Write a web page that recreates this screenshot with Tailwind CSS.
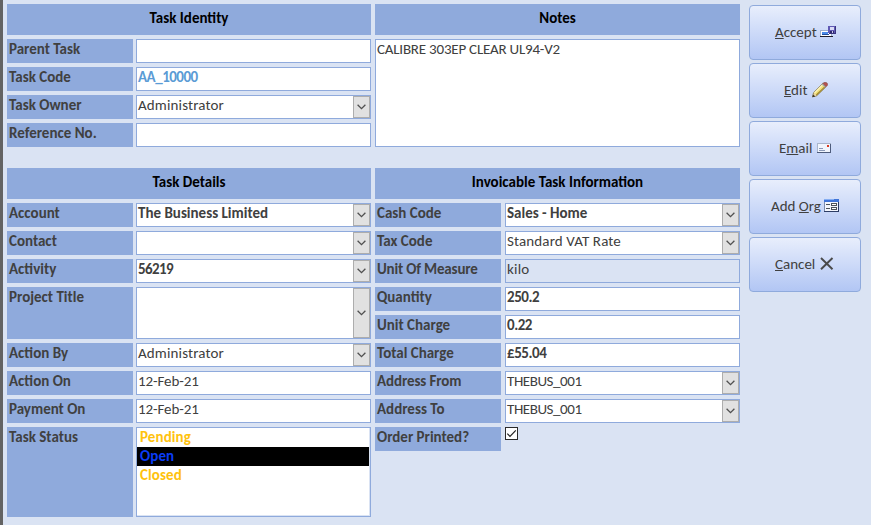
<!DOCTYPE html>
<html lang="en">
<head>
<meta charset="utf-8">
<title>Task</title>
<script src="https://cdn.jsdelivr.net/npm/@tailwindcss/browser@4"></script>
</head>
<body class="flex h-[525px] w-[871px] overflow-hidden bg-[#dae3f3] font-['Carlito','Lato',sans-serif] text-[15px] leading-[16px] text-[#404040] lining-nums">
<svg class="hidden">
  <symbol id="chev" viewBox="0 0 9 6"><path d="M.6 .8 4.5 4.7 8.4 .8" fill="none" stroke="#505050" stroke-width="1.3"/></symbol>
</svg>
<div class="w-[3px] shrink-0 bg-[#636363]"></div>

<main class="ml-1 flex w-[733px] shrink-0 flex-col gap-[21px] pt-1">
  <div class="flex gap-1">
    <section class="flex w-[364px] flex-col gap-1">
      <h2 class="h-[31px] bg-[#8faadc] pt-[6px] text-center font-bold text-black">Task Identity</h2>
      <div class="flex h-6 gap-[3px]">
        <div class="w-[126px] bg-[#8faadc] pt-[2px] pl-[2px] font-bold">Parent Task</div>
        <div class="w-[235px] border border-[#8faadc] bg-white"></div>
      </div>
      <div class="flex h-6 gap-[3px]">
        <div class="w-[126px] bg-[#8faadc] pt-[2px] pl-[2px] font-bold">Task Code</div>
        <div class="w-[235px] border border-[#8faadc] bg-white pt-px pl-px font-bold tracking-[-0.5px] text-[#5b9bd5]">AA_10000</div>
      </div>
      <div class="flex h-6 gap-[3px]">
        <div class="w-[126px] bg-[#8faadc] pt-[2px] pl-[2px] font-bold">Task Owner</div>
        <div class="flex w-[235px] justify-between border border-[#8faadc] bg-white pl-px"><span class="pt-px tracking-[0.15px]">Administrator</span><span class="flex w-[17px] items-center justify-center border border-[#adadad] bg-[#e1e1e1]"><svg class="h-[6px] w-[9px]"><use href="#chev"/></svg></span></div>
      </div>
      <div class="flex h-6 gap-[3px]">
        <div class="w-[126px] bg-[#8faadc] pt-[2px] pl-[2px] font-bold">Reference No.</div>
        <div class="w-[235px] border border-[#8faadc] bg-white"></div>
      </div>
    </section>
    <section class="flex w-[365px] flex-col gap-1">
      <h2 class="h-[31px] bg-[#8faadc] pt-[6px] text-center font-bold text-black">Notes</h2>
      <div class="h-[108px] border border-[#8faadc] bg-white pt-px pl-px tracking-[-0.21px]">CALIBRE 303EP CLEAR UL94-V2</div>
    </section>
  </div>

  <div class="flex gap-1">
    <section class="flex w-[364px] flex-col gap-1">
      <h2 class="h-[31px] bg-[#8faadc] pt-[6px] text-center font-bold text-black">Task Details</h2>
      <div class="flex h-6 gap-[3px]">
        <div class="w-[126px] bg-[#8faadc] pt-[2px] pl-[2px] font-bold">Account</div>
        <div class="flex w-[235px] justify-between border border-[#8faadc] bg-white pl-px"><span class="pt-px font-bold">The Business Limited</span><span class="flex w-[17px] items-center justify-center border border-[#adadad] bg-[#e1e1e1]"><svg class="h-[6px] w-[9px]"><use href="#chev"/></svg></span></div>
      </div>
      <div class="flex h-6 gap-[3px]">
        <div class="w-[126px] bg-[#8faadc] pt-[2px] pl-[2px] font-bold">Contact</div>
        <div class="flex w-[235px] justify-end border border-[#8faadc] bg-white"><span class="flex w-[17px] items-center justify-center border border-[#adadad] bg-[#e1e1e1]"><svg class="h-[6px] w-[9px]"><use href="#chev"/></svg></span></div>
      </div>
      <div class="flex h-6 gap-[3px]">
        <div class="w-[126px] bg-[#8faadc] pt-[2px] pl-[2px] font-bold">Activity</div>
        <div class="flex w-[235px] justify-between border border-[#8faadc] bg-white pl-px"><span class="pt-px font-bold tracking-[-0.6px]">56219</span><span class="flex w-[17px] items-center justify-center border border-[#adadad] bg-[#e1e1e1]"><svg class="h-[6px] w-[9px]"><use href="#chev"/></svg></span></div>
      </div>
      <div class="flex h-[52px] gap-[3px]">
        <div class="w-[126px] bg-[#8faadc] pt-[2px] pl-[2px] font-bold">Project Title</div>
        <div class="flex w-[235px] justify-end border border-[#8faadc] bg-white"><span class="flex w-[17px] items-center justify-center border border-[#adadad] bg-[#e1e1e1]"><svg class="h-[6px] w-[9px]"><use href="#chev"/></svg></span></div>
      </div>
      <div class="flex h-6 gap-[3px]">
        <div class="w-[126px] bg-[#8faadc] pt-[2px] pl-[2px] font-bold">Action By</div>
        <div class="flex w-[235px] justify-between border border-[#8faadc] bg-white pl-px"><span class="pt-px tracking-[0.15px]">Administrator</span><span class="flex w-[17px] items-center justify-center border border-[#adadad] bg-[#e1e1e1]"><svg class="h-[6px] w-[9px]"><use href="#chev"/></svg></span></div>
      </div>
      <div class="flex h-6 gap-[3px]">
        <div class="w-[126px] bg-[#8faadc] pt-[2px] pl-[2px] font-bold">Action On</div>
        <div class="w-[235px] border border-[#8faadc] bg-white pt-px pl-px tracking-[-0.1px]">12-Feb-21</div>
      </div>
      <div class="flex h-6 gap-[3px]">
        <div class="w-[126px] bg-[#8faadc] pt-[2px] pl-[2px] font-bold">Payment On</div>
        <div class="w-[235px] border border-[#8faadc] bg-white pt-px pl-px tracking-[-0.1px]">12-Feb-21</div>
      </div>
      <div class="flex h-[90px] gap-[3px]">
        <div class="w-[126px] bg-[#8faadc] pt-[2px] pl-[2px] font-bold">Task Status</div>
        <div class="w-[235px] border border-[#8faadc] pr-px pb-px">
          <ul class="h-full bg-white font-bold tracking-[0.1px] text-[#ffc20e]">
            <li class="h-[19px] pt-px pl-[3px]">Pending</li>
            <li class="h-[19px] bg-black pt-px pl-[3px] text-[#0a3cf5]">Open</li>
            <li class="h-[19px] pt-px pl-[3px]">Closed</li>
          </ul>
        </div>
      </div>
    </section>

    <section class="flex w-[365px] flex-col gap-1">
      <h2 class="h-[31px] bg-[#8faadc] pt-[6px] text-center font-bold text-black">Invoicable Task Information</h2>
      <div class="flex h-6 gap-1">
        <div class="w-[126px] bg-[#8faadc] pt-[2px] pl-[2px] font-bold">Cash Code</div>
        <div class="flex w-[235px] justify-between border border-[#8faadc] bg-white pl-px"><span class="pt-px font-bold">Sales - Home</span><span class="flex w-[17px] items-center justify-center border border-[#adadad] bg-[#e1e1e1]"><svg class="h-[6px] w-[9px]"><use href="#chev"/></svg></span></div>
      </div>
      <div class="flex h-6 gap-1">
        <div class="w-[126px] bg-[#8faadc] pt-[2px] pl-[2px] font-bold">Tax Code</div>
        <div class="flex w-[235px] justify-between border border-[#8faadc] bg-white pl-px"><span class="pt-px tracking-[0.13px]">Standard VAT Rate</span><span class="flex w-[17px] items-center justify-center border border-[#adadad] bg-[#e1e1e1]"><svg class="h-[6px] w-[9px]"><use href="#chev"/></svg></span></div>
      </div>
      <div class="flex h-6 gap-1">
        <div class="w-[126px] bg-[#8faadc] pt-[2px] pl-[2px] font-bold tracking-[-0.17px]">Unit Of Measure</div>
        <div class="w-[235px] border border-[#8faadc] pt-px pl-px tracking-[0.2px]">kilo</div>
      </div>
      <div class="flex h-6 gap-1">
        <div class="w-[126px] bg-[#8faadc] pt-[2px] pl-[2px] font-bold">Quantity</div>
        <div class="w-[235px] border border-[#8faadc] bg-white pt-px pl-px font-bold tracking-[-0.45px]">250.2</div>
      </div>
      <div class="flex h-6 gap-1">
        <div class="w-[126px] bg-[#8faadc] pt-[2px] pl-[2px] font-bold">Unit Charge</div>
        <div class="w-[235px] border border-[#8faadc] bg-white pt-px pl-px font-bold tracking-[-0.45px]">0.22</div>
      </div>
      <div class="flex h-6 gap-1">
        <div class="w-[126px] bg-[#8faadc] pt-[2px] pl-[2px] font-bold">Total Charge</div>
        <div class="w-[235px] border border-[#8faadc] bg-white pt-px pl-px font-bold tracking-[-0.45px]">£55.04</div>
      </div>
      <div class="flex h-6 gap-1">
        <div class="w-[126px] bg-[#8faadc] pt-[2px] pl-[2px] font-bold tracking-[-0.1px]">Address From</div>
        <div class="flex w-[235px] justify-between border border-[#8faadc] bg-white pl-px"><span class="pt-px tracking-[-0.43px]">THEBUS_001</span><span class="flex w-[17px] items-center justify-center border border-[#adadad] bg-[#e1e1e1]"><svg class="h-[6px] w-[9px]"><use href="#chev"/></svg></span></div>
      </div>
      <div class="flex h-6 gap-1">
        <div class="w-[126px] bg-[#8faadc] pt-[2px] pl-[2px] font-bold">Address To</div>
        <div class="flex w-[235px] justify-between border border-[#8faadc] bg-white pl-px"><span class="pt-px tracking-[-0.43px]">THEBUS_001</span><span class="flex w-[17px] items-center justify-center border border-[#adadad] bg-[#e1e1e1]"><svg class="h-[6px] w-[9px]"><use href="#chev"/></svg></span></div>
      </div>
      <div class="flex h-6 gap-1">
        <div class="w-[126px] bg-[#8faadc] pt-[2px] pl-[2px] font-bold">Order Printed?</div>
        <div class="size-[13px] border border-[#2b2b2b] bg-white"><svg class="size-[11px]" viewBox="0 0 11 11"><path d="M1.3 5.6 4 8.3 9.8 2.4" fill="none" stroke="#222" stroke-width="1.2"/></svg></div>
      </div>
    </section>
  </div>
</main>

<aside class="ml-[9px] flex w-[112px] shrink-0 flex-col gap-[3px] pt-[5px]">
  <button class="flex h-[55px] items-start rounded-[4px] border border-[#8faadc] bg-linear-to-b from-[#e8eefc] to-[#b2c6f4] pt-[18px] pl-[25px] text-left">
    <span class="w-[45px]"><span class="underline decoration-1 underline-offset-1">A</span>ccept</span>
    <svg class="size-4" viewBox="0 0 16 16" shape-rendering="crispEdges">
      <path d="M.5 6.500h11v6h-11z" fill="#fff" stroke="#9fb0cc"/>
      <path d="M0 12.500h13" stroke="#1c1c28"/>
      <path d="M2 8h6v3H2z" fill="#4a8bea"/>
      <path d="M2 10.500h7" stroke="#24509c"/>
      <path d="M8 2h8v8H9V9H8z" fill="#6059b4"/>
      <path d="M15.500 2v8M9 9.500h7" stroke="#3b3580"/>
      <path d="M10 3h4v3h-4z" fill="#d9dbf6"/>
      <path d="M10 7h4v2h-4z" fill="#2f2a6c"/>
      <path d="M12 7h1v2h-1z" fill="#c9c6ec"/>
    </svg>
  </button>
  <button class="flex h-[55px] items-start rounded-[4px] border border-[#8faadc] bg-linear-to-b from-[#e8eefc] to-[#b2c6f4] pt-[18px] pl-[34px] text-left">
    <span class="w-[28px]"><span class="underline decoration-1 underline-offset-1">E</span>dit</span>
    <svg class="size-4" viewBox="0 0 16 16">
      <path d="M.5 14.800 1.600 10.700 10.800 1.500 14 4.700 4.700 13.700z" fill="#f3e27a" stroke="#75653a" stroke-width=".9"/>
      <path d="M2.500 10.800 11 2.300" stroke="#fff7c2" stroke-width="1.200"/>
      <path d="M4.300 13 13 4.600" stroke="#a48a32" stroke-width="1.200"/>
      <path d="M10.800 1.500 12 .6Q14-.2 15.200 1.200T15 3.800L13.800 5z" fill="#b5524e" stroke="#80504e" stroke-width=".6"/>
      <path d="M10.200 2 13.300 5.200" stroke="#a9a9a4" stroke-width="1.200"/>
      <path d="M.4 15.200 1.200 12.400 3.200 14.400z" fill="#3a332c"/>
      <path d="M1.700 11.600 3.900 13.700" stroke="#e6cfae" stroke-width="1.200"/>
    </svg>
  </button>
  <button class="flex h-[55px] items-start rounded-[4px] border border-[#8faadc] bg-linear-to-b from-[#e8eefc] to-[#b2c6f4] pt-[18px] pl-[29px] text-left">
    <span class="w-[37px]">E<span class="underline decoration-1 underline-offset-1">m</span>ail</span>
    <svg class="size-4" viewBox="0 0 16 16" shape-rendering="crispEdges">
      <path d="M1.500 3.500h13v9h-13z" fill="#f1f5fd" stroke="#a9b5cb"/>
      <path d="M1 12.500h14M14.500 4v9" stroke="#4e5c7c"/>
      <path d="M3 8.500h4M3 10.500h6" stroke="#8a99b8"/>
      <path d="M11 5h2v2h-2z" fill="#dc3a22"/>
    </svg>
  </button>
  <button class="flex h-[55px] items-start rounded-[4px] border border-[#8faadc] bg-linear-to-b from-[#e8eefc] to-[#b2c6f4] pt-[18px] pl-[21px] text-left">
    <span class="w-[52px]">Add <span class="underline decoration-1 underline-offset-1">O</span>rg</span>
    <svg class="size-4" viewBox="0 0 16 16" shape-rendering="crispEdges">
      <path d="M1.500 1.500h14v12h-14z" fill="#f3f6fd" stroke="#7c8cae"/>
      <path d="M1 1h15v3H1z" fill="#3f74d8"/>
      <path d="M1 1.500h10" stroke="#86aef2"/>
      <path d="M1 13.500h15M15.500 4v10" stroke="#2c3c64"/>
      <path d="M3 6.500h4M3 10.500h4" stroke="#4c5258"/>
      <path d="M8.500 5.500h5v2h-5zM8.500 9.500h5v2h-5z" fill="#fff" stroke="#4c5258"/>
    </svg>
  </button>
  <button class="flex h-[55px] items-start rounded-[4px] border border-[#8faadc] bg-linear-to-b from-[#e8eefc] to-[#b2c6f4] pt-[18px] pl-[25px] text-left">
    <span class="w-[44px]"><span class="underline decoration-1 underline-offset-1">C</span>ancel</span>
    <svg class="size-4" viewBox="0 0 16 16">
      <path d="M2 2 13.500 13.300M13.500 2 2 13.300" stroke="#4a4a4a" stroke-width="1.900" fill="none"/>
    </svg>
  </button>
</aside>
</body>
</html>
